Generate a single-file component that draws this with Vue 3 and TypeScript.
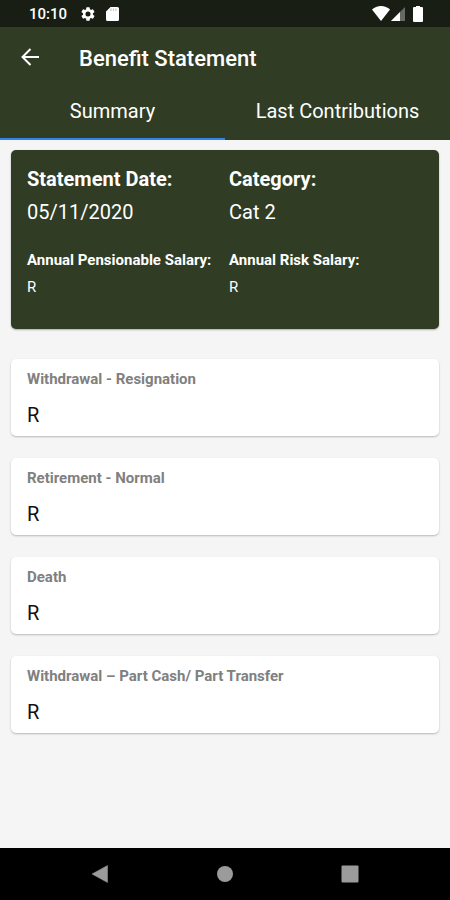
<script setup lang="ts">
import { ref } from 'vue'

interface Field {
  label: string
  value: string
}

const tabs: string[] = ['Summary', 'Last Contributions']
const activeTab = ref<number>(0)

const details: Field[] = [
  { label: 'Statement Date:', value: '05/11/2020' },
  { label: 'Category:', value: 'Cat 2' },
]

const salaries: Field[] = [
  { label: 'Annual Pensionable Salary:', value: 'R' },
  { label: 'Annual Risk Salary:', value: 'R' },
]

const benefits: Field[] = [
  { label: 'Withdrawal - Resignation', value: 'R' },
  { label: 'Retirement - Normal', value: 'R' },
  { label: 'Death', value: 'R' },
  { label: 'Withdrawal – Part Cash/ Part Transfer', value: 'R' },
]
</script>

<template>
  <div class="screen">
    <div class="status">
      <span class="clock">10:10</span>
      <svg class="gear" width="16" height="16" viewBox="0 0 24 24" aria-hidden="true">
        <path
          fill="#fff"
          fill-rule="evenodd"
          d="M19.4 13a7.500 7.500 0 0 0 0-2l2.100-1.650a.5.5 0 0 0 .12-.64l-2-3.460a.5.5 0 0 0-.61-.22l-2.490 1a7.300 7.300 0 0 0-1.690-.98l-.38-2.650A.49.49 0 0 0 14 2h-4a.49.49 0 0 0-.49.42l-.38 2.650c-.61.25-1.170.59-1.690.98l-2.490-1a.5.5 0 0 0-.61.22l-2 3.460a.49.49 0 0 0 .12.64L4.570 11a7.900 7.900 0 0 0 0 2l-2.110 1.650a.5.5 0 0 0-.12.64l2 3.460c.12.22.39.3.61.22l2.490-1c.52.4 1.080.73 1.690.98l.38 2.650c.03.24.24.4.49.4h4c.25 0 .46-.18.49-.42l.38-2.650a7.700 7.700 0 0 0 1.690-.98l2.490 1c.23.09.49 0 .61-.22l2-3.460a.5.5 0 0 0-.12-.64zM12 15.800a3.800 3.800 0 1 1 0-7.600 3.800 3.800 0 0 1 0 7.600z"
        />
      </svg>
      <svg class="card-icon" width="13" height="14" viewBox="0 0 13 14" aria-hidden="true">
        <path fill="#fff" d="M4.500 0h7A1.500 1.500 0 0 1 13 1.500v11a1.500 1.500 0 0 1-1.500 1.500h-10A1.500 1.500 0 0 1 0 12.500V4.500z" />
        <path stroke="#c3c6c0" stroke-width="1.200" d="M5 1.500V4M7.500 1.500V4M10 1.500V4" />
      </svg>
      <span class="spacer"></span>
      <svg width="18" height="15" viewBox="0 0 18 15" aria-hidden="true">
        <path fill="#fff" d="M0 3.500C2.500 1.200 5.500 0 9 0s6.500 1.200 9 3.500L9 15z" />
      </svg>
      <svg class="signal" width="14" height="14" viewBox="0 0 14 14" aria-hidden="true">
        <path fill="#656a62" d="M14 0v14H0z" />
        <path fill="#fff" d="M9 5v9H0z" />
      </svg>
      <svg class="battery" width="10" height="16" viewBox="0 0 10 16" aria-hidden="true">
        <path fill="#fff" d="M3 0h4v1h2a1 1 0 0 1 1 1v13a1 1 0 0 1-1 1H1a1 1 0 0 1-1-1V2a1 1 0 0 1 1-1h2z" />
      </svg>
    </div>

    <header class="top">
      <div class="bar">
        <button class="back" type="button" aria-label="Back">
          <svg width="18" height="18" viewBox="0 0 18 18" aria-hidden="true">
            <path fill="none" stroke="#fff" stroke-width="2" d="M18 9H1.500M9.500 1 1.500 9l8 8" />
          </svg>
        </button>
        <h1 class="title">Benefit Statement</h1>
      </div>
      <nav class="tabs" role="tablist">
        <button
          v-for="(tab, i) in tabs"
          :key="tab"
          class="tab"
          :class="{ active: activeTab === i }"
          type="button"
          role="tab"
          :aria-selected="activeTab === i"
          @click="activeTab = i"
        >
          {{ tab }}
        </button>
      </nav>
    </header>

    <main class="content">
      <section class="summary">
        <dl class="pair large">
          <div v-for="item in details" :key="item.label">
            <dt>{{ item.label }}</dt>
            <dd>{{ item.value }}</dd>
          </div>
        </dl>
        <dl class="pair small">
          <div v-for="item in salaries" :key="item.label">
            <dt>{{ item.label }}</dt>
            <dd>{{ item.value }}</dd>
          </div>
        </dl>
      </section>

      <section class="benefits">
        <article v-for="item in benefits" :key="item.label" class="benefit">
          <h2>{{ item.label }}</h2>
          <p>{{ item.value }}</p>
        </article>
      </section>
    </main>

    <footer class="system">
      <button type="button" aria-label="Back">
        <svg width="18" height="18" viewBox="0 0 18 18" aria-hidden="true">
          <path fill="#9b9b9b" d="M16.500.5v17L1 9z" stroke="#9b9b9b" stroke-width=".5" stroke-linejoin="round" />
        </svg>
      </button>
      <button type="button" aria-label="Home">
        <svg width="18" height="18" viewBox="0 0 18 18" aria-hidden="true">
          <circle cx="9" cy="9" r="8" fill="#9b9b9b" />
        </svg>
      </button>
      <button type="button" aria-label="Recent apps">
        <svg width="18" height="18" viewBox="0 0 18 18" aria-hidden="true">
          <rect x=".5" y=".5" width="17" height="17" rx="1" fill="#9b9b9b" />
        </svg>
      </button>
    </footer>
  </div>
</template>

<style>
body {
  margin: 0;
}
</style>

<style scoped>
.screen {
  display: flex;
  flex-direction: column;
  min-height: 100vh;
  background: #f5f5f5;
  font-family: Roboto, sans-serif;
}

button {
  margin: 0;
  padding: 0;
  border: 0;
  background: none;
  color: inherit;
  font: inherit;
  cursor: pointer;
}

svg {
  display: block;
  flex: none;
}

h1,
h2,
p,
dl,
dt,
dd {
  margin: 0;
}

.status {
  display: flex;
  align-items: center;
  height: 27px;
  padding: 0 27px 0 29px;
  background: #181e13;
  color: #fff;
}

.clock {
  font-size: 15px;
  font-weight: 500;
  line-height: 28px;
}

.gear {
  margin-left: 13px;
}

.card-icon {
  margin-left: 10px;
}

.spacer {
  flex: 1;
}

.signal {
  margin-left: 1px;
}

.battery {
  margin-left: 8px;
}

.top {
  background: #303c24;
  color: #fff;
}

.bar {
  display: flex;
  align-items: center;
  height: 60px;
  padding-left: 21px;
}

.back {
  display: flex;
  width: 58px;
}

.title {
  padding-top: 4px;
  font-size: 22px;
  font-weight: 500;
  line-height: 28px;
}

.tabs {
  display: grid;
  grid-template-columns: 1fr 1fr;
}

.tab {
  height: 53px;
  padding-bottom: 4px;
  border-bottom: 2px solid transparent;
  font-size: 20px;
  line-height: 24px;
  white-space: nowrap;
}

.tab.active {
  border-bottom-color: #2f86e8;
}

.content {
  flex: 1;
  padding: 10px 11px;
}

.summary {
  padding: 15px 8px 28px 16px;
  border-radius: 5px;
  background: #303c24;
  box-shadow: 0 1px 2px rgba(0, 0, 0, 0.3);
  color: #fff;
}

.pair {
  display: grid;
  grid-template-columns: 1fr 1fr;
}

.pair dt {
  font-weight: 700;
  white-space: nowrap;
}

.large {
  font-size: 20px;
  line-height: 28px;
}

.large dd {
  padding-top: 5px;
}

.small {
  padding-top: 21px;
  font-size: 15px;
  line-height: 27px;
}

.benefits {
  display: grid;
  gap: 22px;
  padding-top: 30px;
}

.benefit {
  padding: 8px 16px 7px;
  border-radius: 5px;
  background: #fff;
  box-shadow: 0 1px 2px rgba(0, 0, 0, 0.25);
}

.benefit h2 {
  color: #808080;
  font-size: 15px;
  font-weight: 700;
  line-height: 24px;
}

.benefit p {
  padding-top: 10px;
  color: #111;
  font-size: 20px;
  line-height: 28px;
}

.system {
  display: flex;
  justify-content: center;
  gap: 107px;
  padding: 17px 0;
  background: #000;
}
</style>
